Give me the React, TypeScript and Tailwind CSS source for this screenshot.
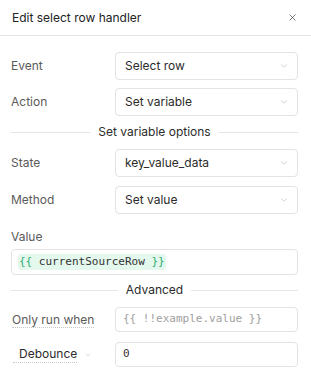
import { X, ChevronDown } from "lucide-react";

function SelectBox({ value }: { value: string }) {
  return (
    <div className="flex h-[28px] w-[183px] items-center justify-between rounded-[4px] border border-[#e3e3e3] bg-white pl-[9px] pr-[8px] text-[12px] text-[#2b2b2b]">
      <span>{value}</span>
      <ChevronDown size={10} strokeWidth={1.5} className="text-[#b5b5b5]" />
    </div>
  );
}

function Row({ label, children }: { label: React.ReactNode; children: React.ReactNode }) {
  return (
    <div className="flex items-center justify-between">
      <div className="text-[12px] leading-[16px] text-[#5a5a5a]">{label}</div>
      {children}
    </div>
  );
}

function Divider({ label }: { label: string }) {
  return (
    <div className="flex h-[16px] items-center gap-[8px]">
      <div className="h-px flex-1 bg-[#e6e6e6]" />
      <span className="text-[12px] leading-[16px] text-[#2b2b2b]">{label}</span>
      <div className="h-px flex-1 bg-[#e6e6e6]" />
    </div>
  );
}

export default function App() {
  return (
    <div className="h-[383px] w-[311px] bg-white font-['Inter',sans-serif]">
      <div className="flex h-[36px] items-center justify-between border-b border-[#e4e4e4] pl-[12px] pr-[13px]">
        <h2 className="text-[12px] leading-[16px] text-[#222]">Edit select row handler</h2>
        <X size={11} strokeWidth={1.5} className="text-[#444]" />
      </div>

      <div className="flex flex-col pl-[11px] pr-[13px] pt-[16px]">
        <Row label="Event">
          <SelectBox value="Select row" />
        </Row>
        <div className="mt-[8px]">
          <Row label="Action">
            <SelectBox value="Set variable" />
          </Row>
        </div>
        <div className="mt-[8px]">
          <Divider label="Set variable options" />
        </div>
        <div className="mt-[9px]">
          <Row label="State">
            <SelectBox value="key_value_data" />
          </Row>
        </div>
        <div className="mt-[9px]">
          <Row label="Method">
            <SelectBox value="Set value" />
          </Row>
        </div>
        <div className="mt-[15px] text-[12px] leading-[16px] text-[#5a5a5a]">Value</div>
        <div className="mt-[4px] flex h-[26px] items-center rounded-[4px] border border-[#e3e3e3] bg-white px-[6px]">
          <span className="rounded-[3px] bg-[#e5f8ee] px-px font-['DejaVu_Sans_Mono',monospace] text-[11px] leading-[16px] text-[#333]">
            <span className="text-[#2fae72]">{"{{"}</span> currentSourceRow <span className="text-[#2fae72]">{"}}"}</span>
          </span>
        </div>
        <div className="mt-[7px]">
          <Divider label="Advanced" />
        </div>
        <div className="mt-[9px]">
          <Row
            label={
              <span className="ml-px border-b border-dotted border-[#c8c8c8]">Only run when</span>
            }
          >
            <div className="flex h-[25px] w-[183px] items-center rounded-[4px] border border-[#e3e3e3] bg-white px-[7px] font-['DejaVu_Sans_Mono',monospace] text-[11px] text-[#a0a0a0]">
              {"{{ !!example.value }}"}
            </div>
          </Row>
        </div>
        <div className="mt-[10px]">
          <Row
            label={
              <span className="ml-[2px] inline-flex items-center gap-[7px] text-[#2b2b2b]">
                <span className="border-b border-dotted border-[#c8c8c8] pl-[6px]">Debounce</span>
                <ChevronDown size={8} strokeWidth={1.5} className="text-[#b5b5b5]" />
              </span>
            }
          >
            <div className="flex h-[25px] w-[183px] items-center rounded-[4px] border border-[#e3e3e3] bg-white px-[7px] font-['DejaVu_Sans_Mono',monospace] text-[11px] text-[#333]">
              0
            </div>
          </Row>
        </div>
      </div>
    </div>
  );
}
